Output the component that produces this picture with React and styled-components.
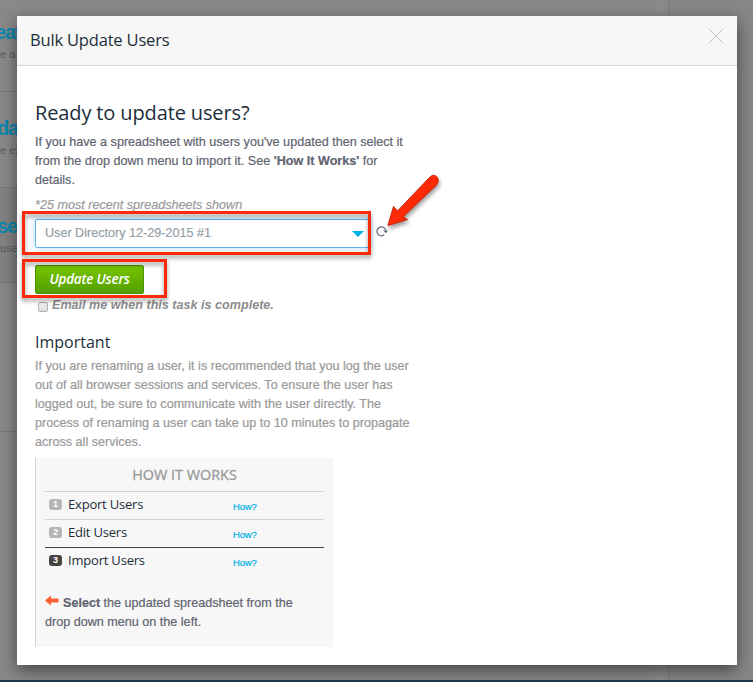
import React from 'react';
import styled, { createGlobalStyle } from 'styled-components';

const GlobalStyle = createGlobalStyle`
  * {
    box-sizing: border-box;
  }
  body {
    margin: 0;
    background: #878787;
    font-family: "Liberation Sans", Arial, sans-serif;
    overflow: hidden;
  }
  h1, h2, h3, p, ul {
    margin: 0;
    padding: 0;
    font-weight: normal;
  }
`;
const Screen = styled.div`
  position: relative;
  width: 753px;
  height: 682px;
  overflow: hidden;
`;
const Page = styled.div`
  display: flex;
  flex-direction: column;
  height: 682px;
`;
const Columns = styled.div`
  display: flex;
  flex: 1;
`;
const Content = styled.div`
  width: 655px;
  background: #888;
`;
const Gutter = styled.div`
  width: 14px;
  background: #8b8b8b;
  border-right: 1px solid #7b7b7b;
`;
const Task = styled.div`
  height: ${props => props.height}px;
  padding-top: ${props => props.top}px;
  background: ${props => props.$active ? '#828282' : '#898989'};
  border-bottom: 1px solid #777;
  white-space: nowrap;
  h3 {
    margin-left: ${props => props.shift}px;
    font-size: 20px;
    line-height: 24px;
    font-weight: bold;
    letter-spacing: -1.2px;
    color: #0888b0;
  }
  p {
    font-size: 11px;
    line-height: 20px;
    color: #5a5a5a;
  }
`;
const Footer = styled.div`
  height: 2px;
  background: #20394a;
`;
const Modal = styled.div`
  position: absolute;
  top: 16px;
  left: 17px;
  width: 720px;
  height: 649px;
  background: white;
  box-shadow: 0 5px 15px rgba(0, 0, 0, .5);
`;
const Header = styled.div`
  display: flex;
  justify-content: space-between;
  height: 50px;
  padding: 12px 13px 0 13px;
  background: #f7f7f7;
  border-bottom: 1px solid #d8d8d8;
  h1 {
    font-family: "Open Sans", sans-serif;
    font-size: 16.5px;
    line-height: 24px;
    letter-spacing: -.18px;
    color: #1c2e3a;
  }
`;
const Close = styled.svg`
  width: 16px;
  height: 16px;
`;
const Body = styled.div`
  width: 400px;
  padding: 32px 0 0 18px;
`;
const Title = styled.h2`
  font-family: "Open Sans", sans-serif;
  font-size: ${props => props.size}px;
  line-height: ${props => props.line}px;
  letter-spacing: ${props => props.spacing || 0}px;
  color: #1c2e3a;
`;
const Text = styled.p`
  font-size: 12.6px;
  line-height: 19px;
  white-space: nowrap;
  color: ${props => props.$muted ? '#999' : '#5f6470'};
  -webkit-text-stroke: .2px;
`;
const Intro = styled.div`
  margin-top: 5px;
`;
const Note = styled.p`
  margin-top: 6px;
  font-size: 12.6px;
  line-height: 19px;
  font-style: italic;
  color: #999;
  -webkit-text-stroke: .2px;
`;
const SelectRow = styled.div`
  display: flex;
  align-items: center;
  gap: 6px;
  margin-top: 4px;
`;
const Select = styled.div`
  display: flex;
  align-items: center;
  justify-content: space-between;
  width: 335px;
  height: 29px;
  padding: 0 5px 2px 9px;
  border: 1px solid #63b0e8;
  border-radius: 2px;
  box-shadow: 0 0 9px rgba(99, 176, 232, .45);
  font-size: 12.6px;
  color: #949fa9;
  -webkit-text-stroke: .2px;
`;
const Caret = styled.span`
  margin-top: 3px;
  border: 6px solid transparent;
  border-top-color: #00b0e8;
  border-bottom: none;
`;
const Refresh = styled.svg`
  width: 12px;
  height: 12px;
  margin-bottom: 5px;
`;
const Button = styled.button`
  display: block;
  width: 109px;
  height: 29px;
  margin-top: 17px;
  padding: 0 0 1px;
  border: 1px solid #4b9100;
  border-radius: 2px;
  background: linear-gradient(#76c400, #549f00);
  font: italic 600 13.5px "Open Sans", sans-serif;
  letter-spacing: -.2px;
  color: white;
`;
const Email = styled.label`
  display: flex;
  height: 19px;
  margin-top: 2px;
  padding-left: 3px;
  font-size: 12.6px;
  font-weight: bold;
  font-style: italic;
  line-height: 19px;
  color: #8c8c8c;
`;
const Checkbox = styled.span`
  width: 10px;
  height: 10px;
  margin: 6px 4px 0 0;
  border: 1px solid #b3b3b3;
  border-radius: 2px;
  background: linear-gradient(#f2f2f2, #dedede);
`;
const Important = styled.div`
  margin-top: 13px;
`;
const Steps = styled.div`
  width: 298px;
  height: 189px;
  margin-top: 6px;
  padding: 5px 9px 0;
  background: #f7f7f7;
  border-left: 1px solid #d3d3d3;
  h3 {
    height: 28px;
    font-family: "Open Sans", sans-serif;
    font-size: 14.4px;
    line-height: 24px;
    text-align: center;
    color: #999;
    -webkit-text-stroke: .3px;
  }
`;
const Step = styled.div`
  display: flex;
  align-items: center;
  height: 28px;
  padding: 0 0 2px 4px;
  border-top: 1px solid ${props => props.$current ? '#444' : '#d3d3d3'};
  font-family: "Open Sans", sans-serif;
  font-size: 13px;
  letter-spacing: -.2px;
  color: #1c2e3a;
  b {
    width: 13px;
    height: 11px;
    margin-right: 6px;
    border-radius: 3px;
    background: ${props => props.$current ? '#444' : '#b5b5b5'};
    font: bold 9px/11px "Liberation Sans", sans-serif;
    text-align: center;
    color: white;
  }
  span {
    width: 165px;
    padding-bottom: 2px;
  }
  a {
    margin-top: 3px;
    font: 9.5px "Liberation Sans", sans-serif;
    color: #00b0e8;
    -webkit-text-stroke: .2px;
  }
`;
const Hint = styled.div`
  margin-top: 19px;
  svg {
    width: 14px;
    height: 11px;
    margin: 0 4px 1px 0;
  }
`;
const Highlight = styled.div`
  position: absolute;
  top: ${props => props.top}px;
  left: 22px;
  width: ${props => props.width}px;
  height: ${props => props.height}px;
  border: 3px solid #fc2a06;
  filter: drop-shadow(0 3px 2px rgba(0, 0, 0, .4));
`;
const Arrow = styled.svg`
  position: absolute;
  top: 165px;
  left: 380px;
  filter: drop-shadow(1px 3px 2px rgba(0, 0, 0, .4));
`;

const tasks = [
  { title: 'eat', text: 'e a n', height: 92, top: 20, shift: -5 },
  { title: 'da', text: 'e ex', height: 96, top: 24, shift: -3 },
  { title: 'se', text: 'use', height: 95, top: 26, shift: -3, active: true },
  { height: 149, top: 0, shift: 0 },
];
const steps = ['Export Users', 'Edit Users', 'Import Users'];

function App() {
  return (
    <Screen>
      <GlobalStyle />
      <Page>
        <Columns>
          <Content>
            {tasks.map((task, i) => (
              <Task key={i} height={task.height} top={task.top} shift={task.shift} $active={task.active}>
                {task.title && <h3>{task.title}</h3>}
                {task.text && <p>{task.text}</p>}
              </Task>
            ))}
          </Content>
          <Gutter />
        </Columns>
        <Footer />
      </Page>
      <Modal>
        <Header>
          <h1>Bulk Update Users</h1>
          <Close viewBox="0 0 16 16">
            <path d="M1 1L15 15M15 1L1 15" stroke="#c3c6c8" strokeWidth="1" />
          </Close>
        </Header>
        <Body>
          <Title size={20} line={30} spacing={-.13}>Ready to update users?</Title>
          <Intro>
            <Text>
              If you have a spreadsheet with users you've updated then select it<br />
              from the drop down menu to import it. See <b>'How It Works'</b> for<br />
              details.
            </Text>
          </Intro>
          <Note>*25 most recent spreadsheets shown</Note>
          <SelectRow>
            <Select>
              User Directory 12-29-2015 #1
              <Caret />
            </Select>
            <Refresh viewBox="0 0 12 12">
              <path d="M8.300 9.800A4.500 4.500 0 1 1 9.900 5.500" fill="none" stroke="#5f6470" strokeWidth="1.200" />
              <path d="M7.200 5.400H12L9.800 8.200Z" fill="#5f6470" />
            </Refresh>
          </SelectRow>
          <Button>Update Users</Button>
          <Email>
            <Checkbox />
            Email me when this task is complete.
          </Email>
          <Important>
            <Title size={16} line={29}>Important</Title>
            <Text $muted>
              If you are renaming a user, it is recommended that you log the user<br />
              out of all browser sessions and services. To ensure the user has<br />
              logged out, be sure to communicate with the user directly. The<br />
              process of renaming a user can take up to 10 minutes to propagate<br />
              across all services.
            </Text>
          </Important>
          <Steps>
            <h3>HOW IT WORKS</h3>
            {steps.map((step, i) => (
              <Step key={step} $current={i === 2}>
                <b>{i + 1}</b>
                <span>{step}</span>
                <a>How?</a>
              </Step>
            ))}
            <Hint>
              <Text>
                <svg viewBox="0 0 14 11">
                  <path d="M0 5.5L6 0.5V3.5H13.5V7.5H6V10.5Z" fill="#fb6033" />
                </svg>
                <b>Select</b> the updated spreadsheet from the<br />
                drop down menu on the left.
              </Text>
            </Hint>
          </Steps>
        </Body>
      </Modal>
      <Highlight top={211} width={349} height={44} />
      <Highlight top={259} width={145} height={39} />
      <Arrow width="70" height="70" viewBox="380 165 70 70">
        <path
          d="M388 225.500L393.500 206.500L397.500 211L429.500 177.500Q433.500 173.500 437 177Q440 181 436 185.500L403 217L407.500 219.500Z"
          fill="#fc2a06"
          stroke="#cf2307"
          strokeLinejoin="round"
        />
      </Arrow>
    </Screen>
  );
}

export default App;
